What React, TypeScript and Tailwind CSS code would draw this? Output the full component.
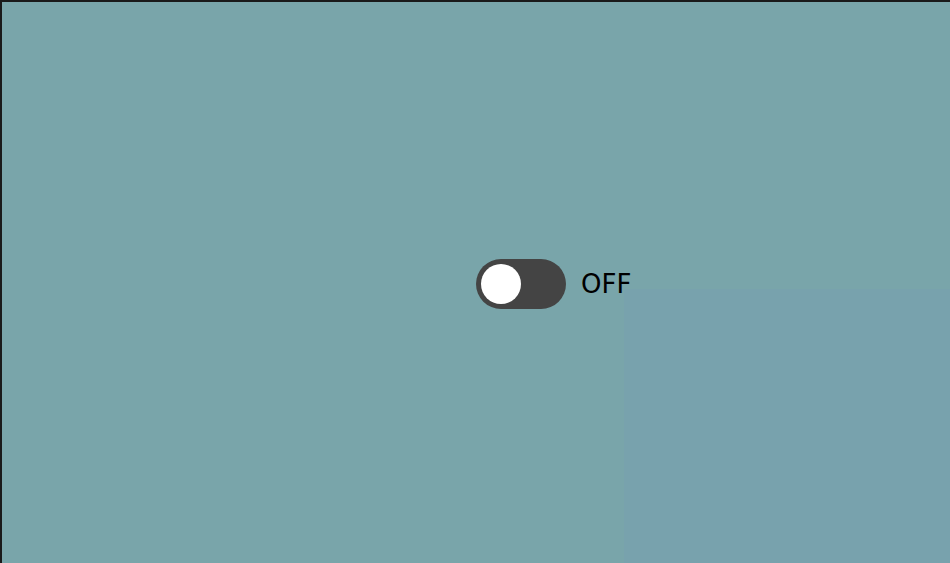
import React, { useState } from 'react';

export default function App() {
  const [on, setOn] = useState(false);

  return (
    <div className="relative h-[563px] w-[950px] overflow-hidden border-t-2 border-l-2 border-[#1a1a1a] bg-[#79a5aa]">
      {/* faint panel resting in the lower right */}
      <div className="absolute left-[622px] top-[287px] h-[280px] w-[330px] bg-[#78a2ad]" />

      <div className="relative flex h-full items-center pl-[474px] pt-[2px]">
        <button
          onClick={() => setOn(!on)}
          className={`flex h-[50px] w-[90px] items-center rounded-full px-[5px] ${on ? 'justify-end bg-[#2e7d32]' : 'justify-start bg-[#444444]'}`}
        >
          <span className="block h-[40px] w-[40px] rounded-full bg-white" />
        </button>
        <span
          className="ml-[15px] text-[26px] leading-none text-black"
          style={{ fontFamily: '"DejaVu Sans", sans-serif' }}
        >
          {on ? 'ON' : 'OFF'}
        </span>
      </div>
    </div>
  );
}
